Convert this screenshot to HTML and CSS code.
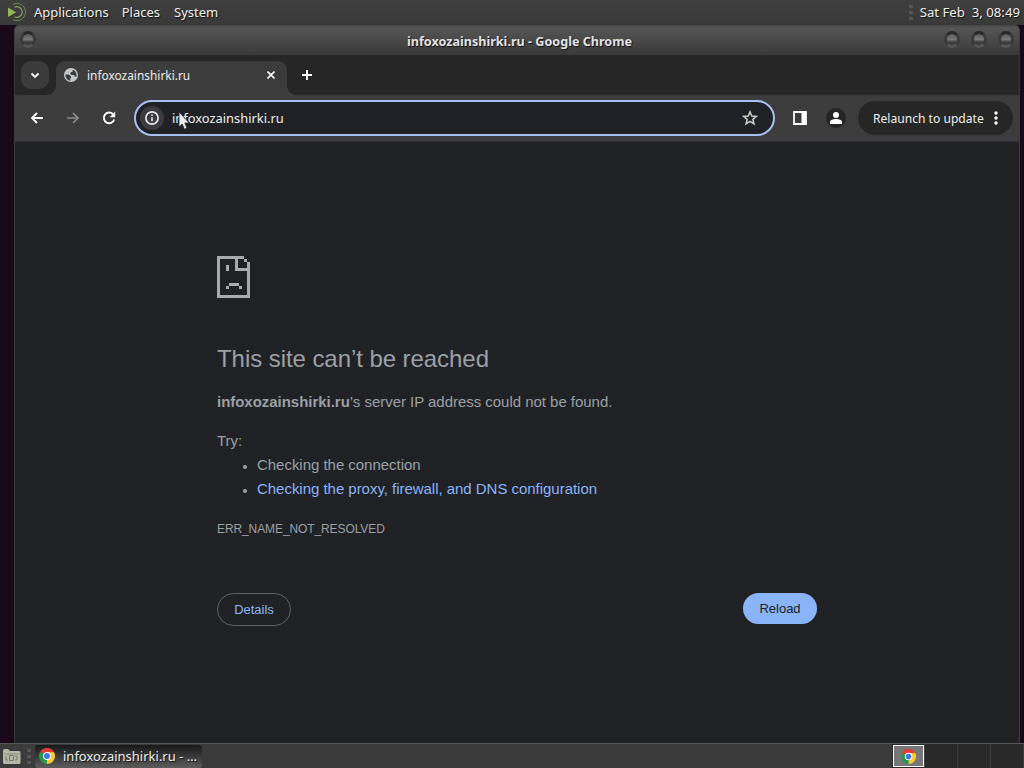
FILE: index.html
```
<!DOCTYPE html>
<html lang="en">
<head>
<meta charset="utf-8">
<title>infoxozainshirki.ru</title>
<link rel="stylesheet" href="styles.css">
</head>
<body>
<svg width="0" height="0" class="defs">
  <symbol id="chrome" viewBox="0 0 16 16">
    <path d="M8 8 1.07 4A8 8 0 0 1 14.93 4z" fill="#e33b2e"/>
    <path d="M8 8 14.93 4A8 8 0 0 1 8 16z" fill="#fcc934"/>
    <path d="M8 8 8 16A8 8 0 0 1 1.07 4z" fill="#279847"/>
    <path d="M8 4.2h6.93L11.3 10 8 16l2-5z" fill="#fcc934"/>
    <circle cx="8" cy="8" r="4" fill="#fff"/>
    <circle cx="8" cy="8" r="3" fill="#3b78e0"/>
  </symbol>
</svg>

<div class="panel">
  <svg class="logo" width="20" height="20" viewBox="0 0 20 20" fill="none" stroke="#87a556">
    <path d="M6 2.4A8.600 8.600 0 1 1 6 17.600" stroke-width="1" opacity=".7"/>
    <path d="M7.500 5.300A5.300 5.300 0 1 1 7.500 14.700" stroke-width="1.200"/>
    <path d="M1 5.500v9.500l8-4.700z" fill="#93b656" stroke="none"/>
  </svg>
  <span class="apps">Applications</span>
  <span class="places">Places</span>
  <span>System</span>
  <i class="grip"></i>
  <span class="clock">Sat Feb&nbsp; 3, 08:49</span>
</div>

<div class="window">
  <div class="titlebar">
    <i class="knob"></i>
    <b>infoxozainshirki.ru - Google Chrome</b>
    <div class="knobs"><i class="knob"></i><i class="knob"></i><i class="knob"></i></div>
  </div>

  <div class="tabs">
    <div class="search"><svg width="10" height="7" viewBox="0 0 10 7"><path d="M1.500 1.500 5 5l3.500-3.500" fill="none" stroke="#fff" stroke-width="1.800"/></svg></div>
    <div class="tab">
      <svg width="14" height="14" viewBox="0 0 14 14"><circle cx="7" cy="7" r="7" fill="#c3c5c7"/><path d="M1.400 6.400 5 6.600l2 2v1.500l-.8.3v2.100C3.400 12.200 1.300 9.800 1.400 6.400zM8.800 1.700C11 2.400 12.600 4.600 12.600 7c0 .8-.2 1.300-.4 1.900l-1.700-.6-.3-1.300H7.300L6.200 5.800l.5-1.600 1.800-.4z" fill="#3c3c3c"/></svg>
      <span>infoxozainshirki.ru</span>
      <svg class="close" width="8" height="8" viewBox="0 0 8 8"><path d="M.5.5l7 7M7.500.5l-7 7" stroke="#fff" stroke-width="1.600"/></svg>
    </div>
    <svg class="plus" width="12" height="12" viewBox="0 0 12 12"><path d="M6 1v10M1 6h10" stroke="#fff" stroke-width="1.900"/></svg>
  </div>

  <div class="toolbar">
    <svg class="back" width="14" height="12" viewBox="0 0 14 12"><path d="M13 6H2M7 1 2 6l5 5" fill="none" stroke="#fff" stroke-width="1.800"/></svg>
    <svg class="fwd" width="14" height="12" viewBox="0 0 14 12"><path d="M1 6h11M7 1l5 5-5 5" fill="none" stroke="#8a8a8a" stroke-width="1.700"/></svg>
    <svg class="reload" width="14" height="14" viewBox="0 0 14 14"><path d="M11 3.200A5.300 5.300 0 1 0 12.200 8.500" fill="none" stroke="#fff" stroke-width="1.900"/><path d="M13.200.5v5.800H7.600z" fill="#fff"/></svg>
    <div class="omnibox">
      <div class="info"><svg width="14" height="14" viewBox="0 0 14 14"><circle cx="7" cy="7" r="6.100" fill="none" stroke="#e8e8e8" stroke-width="1.700"/><path d="M7 6.200v4M7 3.600v1.500" stroke="#e8e8e8" stroke-width="1.600"/></svg></div>
      <span class="url">infoxozainshirki.ru</span>
      <svg class="star" width="16" height="16" viewBox="0 0 16 16"><path d="M8 1.800 9.800 6l4.500.4-3.400 3 1 4.400L8 11.400l-3.900 2.400 1-4.400-3.400-3L6.200 6z" fill="none" stroke="#c7c7c7" stroke-width="1.600"/></svg>
      <svg class="cursor" width="12" height="20" viewBox="0 0 12 20"><path d="M1 1v15l3.200-3 2.200 5.200 2.600-1.100L6.800 12h4.400z" fill="#eee" stroke="#26272b" stroke-width=".8"/></svg>
    </div>
    <svg class="side" width="14" height="14" viewBox="0 0 14 14"><path d="M1 1h12v12H1z" fill="none" stroke="#fff" stroke-width="1.800"/><path d="M8.500 1H13v12H8.500z" fill="#fff"/></svg>
    <div class="avatar"><svg width="12" height="12" viewBox="0 0 12 12" fill="#fff"><circle cx="6" cy="3" r="3"/><path d="M0 12V9.900C0 8 3 7 6 7s6 1 6 2.900V12z"/></svg></div>
    <div class="update"><span>Relaunch to update</span><svg width="4" height="14" viewBox="0 0 4 14" fill="#fff"><circle cx="2" cy="2" r="1.700"/><circle cx="2" cy="7" r="1.700"/><circle cx="2" cy="12" r="1.700"/></svg></div>
  </div>

  <div class="page">
    <div class="main">
      <svg class="sad" width="33" height="42" viewBox="0 0 33 42" shape-rendering="crispEdges"><path d="M0 0h27v3H21v9h9V6h3v36H0zM3 3v36h27V15H18V3zM27 3h3v3H27zM9 9h3v6H9zM12 27h10v3H12zM9 30h3v3H9zM22 30h3v3H22z" fill="#a9aaac" fill-rule="evenodd"/></svg>
      <h1>This site can’t be reached</h1>
      <p><strong>infoxozainshirki.ru</strong>’s server IP address could not be found.</p>
      <div class="try">
        <p>Try:</p>
        <ul>
          <li>Checking the connection</li>
          <li><a>Checking the proxy, firewall, and DNS configuration</a></li>
        </ul>
      </div>
      <div class="code">ERR_NAME_NOT_RESOLVED</div>
      <div class="buttons">
        <button class="details">Details</button>
        <button class="blue">Reload</button>
      </div>
    </div>
  </div>
</div>

<div class="taskbar">
  <svg class="folder" width="20" height="18" viewBox="0 0 20 18"><path d="M1 3.500Q1 2 2.500 2H6l2 2h9q1.500 0 1.500 1.500v10q0 1.500-1.500 1.500H2.500Q1 17 1 15.500z" fill="#b4b6a7"/><path d="M2 7h15.500" stroke="#8b8d80"/><path d="M7.500 8.500h4v5h-4zM4 9v4h2M13 9h2v4h-2" fill="none" stroke="#75776b"/></svg>
  <i class="grip"></i>
  <div class="task"><svg width="16" height="16"><use href="#chrome"/></svg><span>infoxozainshirki.ru - …</span></div>
  <div class="pager">
    <div class="desk"><div class="mini"><svg width="15" height="15"><use href="#chrome"/></svg></div></div>
    <div class="desk"></div>
    <div class="desk"></div>
    <div class="desk"></div>
  </div>
</div>
</body>
</html>
```
FILE: styles.css
```
* {
  box-sizing: border-box;
}
body {
  margin: 0;
  width: 1024px;
  height: 768px;
  overflow: hidden;
  display: flex;
  flex-direction: column;
  background: #180818;
  color: #eee;
  font: 13px/18px "Noto Sans", sans-serif;
}
svg {
  display: block;
  flex: none;
}
.defs {
  position: absolute;
}
.panel {
  height: 25px;
  flex: none;
  display: flex;
  align-items: center;
  padding: 0 4px 1px 7px;
  background: linear-gradient(#3f3f3f, #393939);
  text-shadow: 1px 1px 1px #111;
  white-space: nowrap;
}
.apps {
  margin: 0 13px 0 7px;
}
.places {
  margin-right: 14px;
}
.grip {
  width: 4px;
  height: 15px;
  margin-left: auto;
  background: repeating-linear-gradient(#555 0 3px, transparent 3px 6px);
}
.clock {
  margin-left: 7px;
  font-size: 13.2px;
}

/* browser window */
.window {
  height: 718px;
  flex: none;
  margin: 0 4px 0 14px;
  display: flex;
  flex-direction: column;
  border-left: 1px solid #3a3a3c;
  border-right: 1px solid #3a3a3c;
  border-radius: 5px 5px 0 0;
  background: #202124;
  overflow: hidden;
}
.titlebar {
  height: 30px;
  flex: none;
  display: grid;
  grid-template-columns: 1fr auto 1fr;
  align-items: center;
  padding: 0 5px 0 5px;
  background: linear-gradient(#454545, #555 10%, #393939);
}
.titlebar b {
  font-size: 12.6px;
  margin: 4px 0 0 5px;
  color: #e2e2e2;
  text-shadow: 1px 1px 1px #111;
}
.knobs {
  display: flex;
  gap: 11px;
  justify-content: flex-end;
}
.knob {
  width: 16px;
  height: 17px;
  margin-top: -2px;
  border: 3px solid;
  border-color: #282828 #3a3a3a #565656;
  border-radius: 50%;
  background: linear-gradient(#5c5c5c, #777 50%, #3c3c3c 75%);
}
.tabs {
  height: 40px;
  flex: none;
  display: flex;
  align-items: center;
  padding-left: 6px;
  background: #262626;
}
.search {
  width: 28px;
  height: 28px;
  display: flex;
  align-items: center;
  justify-content: center;
  border-radius: 10px;
  background: #3b3b3b;
}
.tab {
  width: 231px;
  height: 34px;
  margin: 6px 14px 0 7px;
  padding: 0 12px 6px 8px;
  position: relative;
  display: flex;
  align-items: center;
  border-radius: 9px 9px 0 0;
  background: #3c3c3c;
  font-size: 11.9px;
}
.tab::before,
.tab::after {
  content: "";
  position: absolute;
  bottom: 0;
  width: 9px;
  height: 9px;
}
.tab::before {
  left: -9px;
  background: radial-gradient(circle at 0 0, transparent 8.5px, #3c3c3c 9px);
}
.tab::after {
  right: -9px;
  background: radial-gradient(circle at 100% 0, transparent 8.5px, #3c3c3c 9px);
}
.tab span {
  margin-left: 9px;
}
.close {
  margin-left: auto;
}
.toolbar {
  height: 46px;
  flex: none;
  display: flex;
  align-items: center;
  padding-left: 15px;
  background: #3c3c3c;
  box-shadow: 0 1px #303032;
  font-size: 12px;
}
.fwd {
  margin-left: 22px;
}
.reload {
  margin-left: 22px;
}
.omnibox {
  width: 641px;
  height: 36px;
  margin: 0 18px 0 18px;
  padding: 0 15px 0 5px;
  position: relative;
  display: flex;
  align-items: center;
  border: 2px solid #a8c0f0;
  border-radius: 18px;
  background: #202126;
}
.info {
  width: 24px;
  height: 24px;
  margin-left: -1px;
  display: flex;
  align-items: center;
  justify-content: center;
  border-radius: 50%;
  background: #3b3b3d;
}
.url {
  margin-left: 8px;
  font-size: 12.9px;
}
.star {
  margin-left: auto;
}
.cursor {
  position: absolute;
  left: 42px;
  top: 9px;
}
.avatar {
  width: 20px;
  height: 20px;
  margin: 0 12px 0 19px;
  display: flex;
  align-items: center;
  justify-content: center;
  border-radius: 50%;
  background: #252525;
}
.update {
  width: 155px;
  height: 34px;
  padding: 0 15px;
  display: flex;
  align-items: center;
  justify-content: space-between;
  border-radius: 17px;
  background: #262626;
  font-size: 12.1px;
  white-space: nowrap;
}
.update span {
  margin-top: 1px;
}

/* error page */
.page {
  flex: 1;
  color: #9aa0a6;
  font: 15px/24px "Liberation Sans", Arial, sans-serif;
  letter-spacing: -.03px;
}
.main {
  width: 600px;
  margin: 115px 0 0 202px;
}
h1 {
  margin: 46px 0 16px;
  font-size: 24px;
  font-weight: 500;
  line-height: 30px;
  letter-spacing: -.06px;
}
p {
  margin: 0;
}
.try {
  margin-top: 15px;
}
ul {
  margin: 0;
  padding-left: 40px;
  list-style: none;
}
li::before {
  content: "";
  display: inline-block;
  width: 4px;
  height: 4px;
  margin: 0 10px 1px -14px;
  border-radius: 50%;
  background: #9aa0a6;
}
a {
  color: #8ab4f8;
}
.code {
  margin-top: 16px;
  font-size: 12px;
  letter-spacing: -.1px;
}
.buttons {
  margin-top: 52px;
  display: flex;
  align-items: flex-start;
  justify-content: space-between;
}
button {
  width: 74px;
  height: 31px;
  padding: 0;
  border: 0;
  border-radius: 17px;
  font: 13px "Liberation Sans", Arial, sans-serif;
}
.details {
  height: 33px;
  border: 1px solid #5f6368;
  background: none;
  color: #8ab4f8;
}
.blue {
  background: #8ab4f8;
  color: #202124;
}

/* bottom panel */
.taskbar {
  height: 25px;
  flex: none;
  display: flex;
  align-items: center;
  padding-left: 2px;
  border-top: 1px solid #555;
  background: #3b3b3b;
  text-shadow: 1px 1px 1px #111;
}
.taskbar .grip {
  margin: 0 4px 0 5px;
}
.task {
  width: 167px;
  height: 23px;
  padding-left: 4px;
  display: flex;
  align-items: center;
  border-radius: 3px;
  background: linear-gradient(#181818, #5c5c5c);
  white-space: nowrap;
}
.task span {
  margin-left: 8px;
}
.pager {
  display: flex;
  height: 24px;
  margin-left: auto;
}
.desk {
  width: 33px;
  border-right: 1px solid #3d3d3d;
  background: #292929;
}
.desk:first-child {
  padding: 1px 0 0 1px;
}
.mini {
  width: 31px;
  height: 22px;
  display: flex;
  align-items: center;
  justify-content: center;
  border: 1px solid #fff;
  background: #777;
}
```
